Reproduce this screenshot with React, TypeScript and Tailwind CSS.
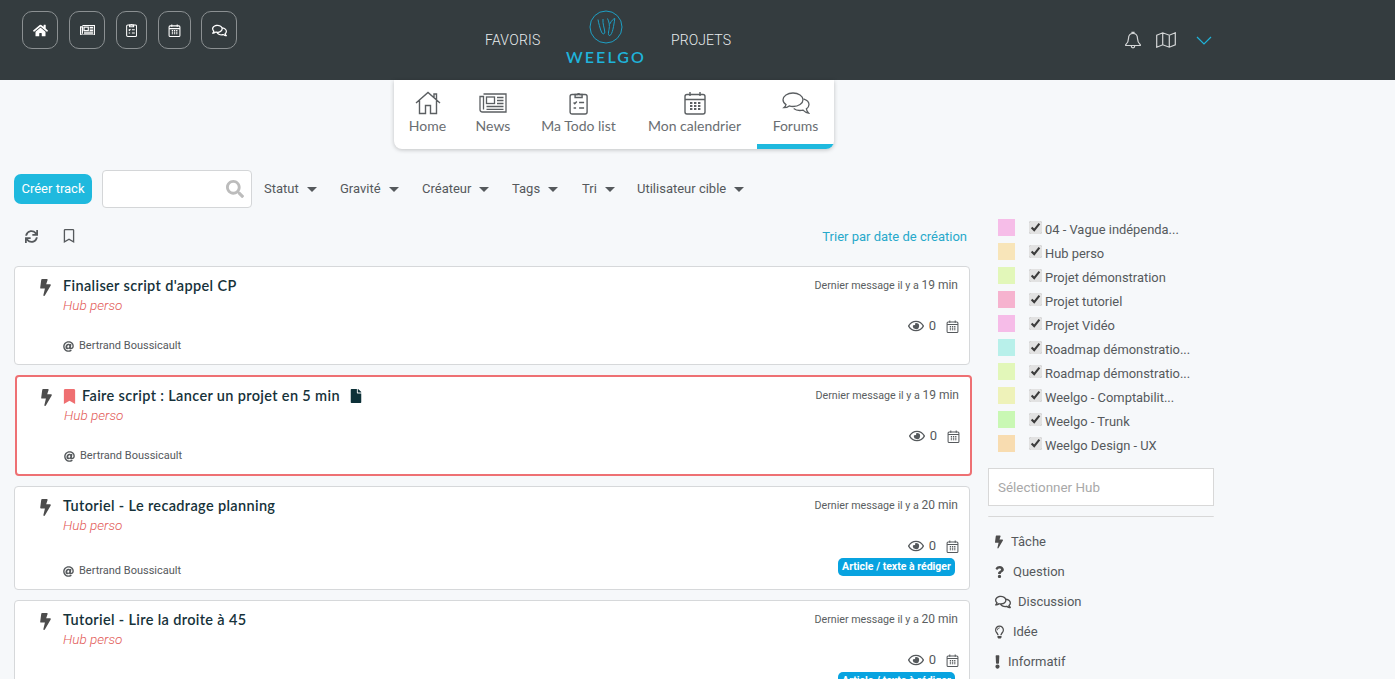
import React from "react";
import { FaHome, FaRegComments, FaSearch, FaSync, FaRegBookmark, FaBookmark, FaBolt, FaFile, FaRegEye, FaAt, FaQuestion, FaExclamation, FaRegLightbulb } from "react-icons/fa";

const ROBOTO = "font-['Roboto',sans-serif]";

function ClipboardIcon({ size = 24, w = 1.4 }: { size?: number; w?: number }) {
  return (
    <svg width={size * 0.8} height={size} viewBox="0 0 19 24" fill="none" stroke="currentColor" strokeWidth={w}>
      <rect x="1" y="3.500" width="17" height="19.500" rx="2" />
      <path d="M6 3.500h2.200a1.400 1.400 0 0 1 2.600 0H13v3H6z" />
      <path d="M4.500 11.500l1.200 1.200 2-2.200M10 11.500h5M4.500 17h2.500M10 17h5" />
    </svg>
  );
}

function CalendarIcon({ size = 24, w = 1.4 }: { size?: number; w?: number }) {
  return (
    <svg width={size} height={size} viewBox="0 0 24 24" fill="none" stroke="currentColor" strokeWidth={w}>
      <rect x="2" y="3.500" width="20" height="19.500" rx="2" />
      <path d="M2 8.500h20M7 1v4M17 1v4" />
      <path d="M7 12h2.400M11 12h2.400M15 12h2.400M7 15h2.400M11 15h2.400M15 15h2.400M7 18h2.400M11 18h2.400M15 18h2.400" strokeWidth="2" />
    </svg>
  );
}

function HomeIcon() {
  return (
    <svg width="26" height="24" viewBox="0 0 26 24" fill="none" stroke="currentColor" strokeWidth="1.4">
      <path d="M1 12L13 1.500 25 12M19 6.500V3h2.500v5.600M4.500 9.500V22.500H10.500V14.500H15.500V22.500H21.500V9.500" />
    </svg>
  );
}

function NewsIcon({ width = 28, w = 1.3 }: { width?: number; w?: number }) {
  return (
    <svg width={width} height={(width * 20) / 28} viewBox="0 0 28 20" fill="none" stroke="currentColor" strokeWidth={w}>
      <path d="M4.500 1H27V19H3.500A2.500 2.500 0 0 1 1 16.500V3.500H4.500V16.500" />
      <rect x="7.500" y="4" width="8" height="6.500" />
      <path d="M18 4.500h6.500M18 7.500h6.500M18 10.500h6.500M7.500 13.500h17M7.500 16.300h17" />
    </svg>
  );
}

function ForumIcon() {
  return (
    <svg width="28" height="23" viewBox="0 0 28 23" fill="none" stroke="currentColor" strokeWidth="1.3">
      <path d="M11 1C5.500 1 1 4 1 7.800c0 2 1.200 3.600 3 4.800-.3 1.200-1 2.200-2 3 2 0 3.800-.6 5.200-1.700 1.200.4 2.500.6 3.800.6 5.500 0 10-3 10-6.700S16.500 1 11 1z" />
      <path d="M21.500 6.800c3 1 5.500 3 5.500 5.700 0 1.800-1 3.300-2.600 4.400.2 1.400 1 2.900 2.100 4.100-2.300-.4-4.200-1.500-5.500-2.900-1 .3-2.100.4-3.200.4-2.500 0-4.600-.7-6.100-2" />
    </svg>
  );
}

function Logo() {
  return (
    <svg width="34" height="34" viewBox="0 0 34 34" fill="none" stroke="#1e9fc4" strokeWidth="1">
      <circle cx="17" cy="17" r="16" />
      <path d="M9 9.500c.5 3 2 9 3.500 12.500 1 2.500 3.500 2.500 3.300 0-.3-4-2.300-8-1.800-13" />
      <path d="M18.500 8.500c1.500 3 2.500 7 1.500 11-.7 3-1 6.500.8 6 2.700-1 4-10 5-17-1.500.5-3.300 2-5 5.500" />
    </svg>
  );
}

function BellIcon() {
  return (
    <svg width="16" height="18" viewBox="0 0 16 18" fill="none" stroke="#d4d6d7" strokeWidth="1.200">
      <path d="M8 2.500c-2.900 0-4.500 2.200-4.500 5 0 3-1 4.700-2.800 6.300v.7h14.600v-.7c-1.800-1.600-2.800-3.300-2.800-6.300 0-2.800-1.600-5-4.500-5z" />
      <path d="M7 2.500V1.300h2v1.200M6.300 15c0 2.400 3.400 2.400 3.400 0" />
    </svg>
  );
}

function MapIcon() {
  return (
    <svg width="20" height="16" viewBox="0 0 20 16" fill="none" stroke="#d4d6d7" strokeWidth="1.200">
      <path d="M.7 3.200L6.700.8l6.600 2.400 6-2.400v12l-6 2.400-6.600-2.400-6 2.400zM6.700.8v12M13.300 3.200v12" />
    </svg>
  );
}

function HeaderButton({ width, children }: { width: string; children: React.ReactNode }) {
  return (
    <div className={`${width} h-[38px] border border-[#8b9092] rounded-[10px] flex items-center justify-center text-white`}>
      {children}
    </div>
  );
}

function Header() {
  return (
    <header className="h-[80px] bg-[#343c3f] flex shrink-0">
      <div className="w-[485px] pl-[22px] pt-[11px]">
        <div className="flex">
          <HeaderButton width="w-[36px]"><FaHome size={15} /></HeaderButton>
          <div className="w-[11px]" />
          <HeaderButton width="w-[36px]"><NewsIcon width={15} w={2.200} /></HeaderButton>
          <div className="w-[11px]" />
          <HeaderButton width="w-[31px]"><ClipboardIcon size={14} w={1.800} /></HeaderButton>
          <div className="w-[11px]" />
          <HeaderButton width="w-[33px]"><CalendarIcon size={13} w={2} /></HeaderButton>
          <div className="w-[10px]" />
          <HeaderButton width="w-[36px]"><FaRegComments size={15} /></HeaderButton>
        </div>
      </div>
      <div className="w-[56px] pt-[31px] text-[14px] leading-[18px] tracking-[0.250px] font-light text-[#e8ecee] whitespace-nowrap">FAVORIS</div>
      <div className="w-[130px] flex flex-col items-center pt-[10px]">
        <Logo />
        <div className="mt-[3px] text-[16px] leading-[20px] tracking-[2.100px] font-semibold text-[#1fb3da] font-['Lato',sans-serif]">WEELGO</div>
      </div>
      <div className="w-[454px] pt-[31px] text-[14px] leading-[18px] tracking-[0.100px] font-light text-[#e8ecee]">PROJETS</div>
      <div className="flex items-start pt-[31px]">
        <BellIcon />
        <span className="ml-[15px] mt-[1px] flex"><MapIcon /></span>
        <svg width="16" height="9" viewBox="0 0 16 9" fill="none" stroke="#1fb3da" strokeWidth="1.200" className="ml-[20px] mt-[5px]">
          <path d="M1 1l7 7 7-7" />
        </svg>
      </div>
    </header>
  );
}

const tabs = [
  { label: "Home", icon: <HomeIcon />, width: "w-[67px]" },
  { label: "News", icon: <NewsIcon />, width: "w-[64px]" },
  { label: "Ma Todo list", icon: <ClipboardIcon />, width: "w-[107px]" },
  { label: "Mon calendrier", icon: <CalendarIcon />, width: "w-[125px]" },
  { label: "Forums", icon: <ForumIcon />, width: "w-[77px] border-b-[5px] border-[#1fb9de]" },
];

function Tabs() {
  return (
    <div className="ml-[394px] w-[440px] h-[69px] bg-white rounded-b-[8px] shadow-[0_1px_4px_rgba(0,0,0,0.22)] flex overflow-hidden shrink-0 font-['Lato',sans-serif] text-[#6a6e72]">
      {tabs.map((t) => (
        <div key={t.label} className={`${t.width} flex flex-col items-center`}>
          <div className="h-[28px] mt-[9px] flex items-center justify-center text-[#5b5f62]">{t.icon}</div>
          <div className="text-[14px] leading-[18px] whitespace-nowrap">{t.label}</div>
        </div>
      ))}
    </div>
  );
}

function Filter({ label, width }: { label: string; width: string }) {
  return (
    <div className={`${width} flex items-center text-[13px] text-[#55595c]`}>
      <span>{label}</span>
      <span className="ml-[8px] w-0 h-0 border-x-[5px] border-x-transparent border-t-[5px] border-t-[#55595c]" />
    </div>
  );
}

function Toolbar() {
  return (
    <div className="mt-[21px] ml-[14px] h-[38px] flex items-center shrink-0">
      <div className="w-[78px] h-[30px] rounded-[7px] bg-[#1fb9de] text-white text-[13px] flex items-center justify-center">Créer track</div>
      <div className="ml-[10px] w-[150px] h-[38px] bg-white border border-[#d4d6d8] rounded-[4px] flex items-center justify-end pr-[7px] text-[#bcbcbc]">
        <FaSearch size={18} />
      </div>
      <div className="ml-[12px] flex items-center">
        <Filter label="Statut" width="w-[76px]" />
        <Filter label="Gravité" width="w-[82px]" />
        <Filter label="Créateur" width="w-[90px]" />
        <Filter label="Tags" width="w-[70px]" />
        <Filter label="Tri" width="w-[55px]" />
        <Filter label="Utilisateur cible" width="w-[120px]" />
      </div>
    </div>
  );
}

function Badge() {
  return (
    <div className="mt-[3px] mr-[3px] h-[18px] w-[117px] bg-[#08a3e0] rounded-[5px] text-white text-[10.500px] font-bold flex items-center justify-center whitespace-nowrap">
      Article / texte à rédiger
    </div>
  );
}

type CardProps = {
  title: string;
  time: string;
  height: string;
  authorGap: string;
  badge?: boolean;
  highlighted?: boolean;
};

function Card({ title, time, height, authorGap, badge, highlighted }: CardProps) {
  return (
    <div
      className={`${height} shrink-0 bg-white flex justify-between pr-[11px] rounded-[4px] ${
        highlighted ? "border-2 border-[#ee7073] ml-px -mr-[2px] pt-[9px]" : "border border-[#d6d8da] pt-[9px]"
      }`}
    >
      <div className="flex">
        <FaBolt size={17} className={`${highlighted ? "ml-[21px]" : "ml-[22px]"} mt-[3px] text-[#4d4d4d]`} />
        <div className={highlighted ? "ml-[7px]" : "ml-[9px]"}>
          <div className="flex items-center h-[20px]">
            {highlighted && <FaBookmark size={15} className="mr-[5px] text-[#ef6f71]" />}
            <span className="text-[14.500px] leading-[20px] font-semibold tracking-[0.350px] text-[#16323a] font-['Lato',sans-serif] whitespace-nowrap">{title}</span>
            {highlighted && <FaFile size={14} className="ml-[9px] text-[#0d3138]" />}
          </div>
          <div className={`${highlighted ? "ml-[2px]" : ""} h-[19px] leading-[18px] text-[13.500px] italic font-light text-[#e25a57]`}>Hub perso</div>
          <div className={`${authorGap} ${highlighted ? "ml-[2px]" : ""} flex items-center h-[20px] text-[11px] text-[#55595c]`}>
            <FaAt size={11} className="mr-[5px]" />
            Bertrand Boussicault
          </div>
        </div>
      </div>
      <div className="flex flex-col items-end">
        <div className="h-[18px] leading-[18px] text-[10.700px] text-[#5a5e61]">
          Dernier message il y a <span className="text-[12px]">{time}</span>
        </div>
        <div className="mt-[23px] h-[18px] flex items-center text-[#55595c]">
          <FaRegEye size={16} />
          <span className="ml-[5px] text-[13px]">0</span>
          <span className="ml-[10px] -mr-px flex"><CalendarIcon size={13} w={1.900} /></span>
        </div>
        {badge && <Badge />}
      </div>
    </div>
  );
}

const hubs = [
  ["04 - Vague indépenda...", "bg-[#f6bde8]"],
  ["Hub perso", "bg-[#f8e5b9]"],
  ["Projet démonstration", "bg-[#e2f7b9]"],
  ["Projet tutoriel", "bg-[#f6b3cf]"],
  ["Projet Vidéo", "bg-[#f6bce8]"],
  ["Roadmap démonstratio...", "bg-[#b8f0ea]"],
  ["Roadmap démonstratio...", "bg-[#e2f7b9]"],
  ["Weelgo - Comptabilit...", "bg-[#eef2b9]"],
  ["Weelgo - Trunk", "bg-[#c9f8b4]"],
  ["Weelgo Design - UX", "bg-[#f8dcb0]"],
];

const kinds = [
  { label: "Tâche", icon: <FaBolt size={14} />, gap: "ml-[8px]", w: "w-[8px]" },
  { label: "Question", icon: <FaQuestion size={14} />, gap: "ml-[9px]", w: "w-[9px]" },
  { label: "Discussion", icon: <FaRegComments size={16} />, gap: "ml-[7px]", w: "w-[16px]" },
  { label: "Idée", icon: <FaRegLightbulb size={14} />, gap: "ml-[9px]", w: "w-[9px]" },
  { label: "Informatif", icon: <FaExclamation size={14} />, gap: "ml-[8px]", w: "w-[5px]" },
];

function Sidebar() {
  return (
    <aside className="w-[226px] ml-[18px] shrink-0 mt-[11px] text-[#55595c]">
      <div className="pl-[10px]">
        {hubs.map(([name, color], i) => (
          <div key={i} className="h-[24px] flex items-start">
            <span className={`w-[17px] h-[17px] ${color}`} />
            <input type="checkbox" defaultChecked readOnly className="ml-[14px] mt-[2px] w-[13px] h-[13px] m-0 accent-[#e2e2e2]" />
            <span className="ml-[3px] mt-[2px] text-[12.900px] leading-[17px] whitespace-nowrap">{name}</span>
          </div>
        ))}
      </div>
      <div className="mt-[9px] h-[38px] bg-white border border-[#d8d8d8] flex items-center pl-[9px] pt-[2px] text-[13.400px] text-[#a8a8a8]">Sélectionner Hub</div>
      <div className="mt-[10px] h-[2px] border-t border-[#d8d8d8] rounded-[4px]" />
      <div className="mt-[9px] pl-[7px]">
        {kinds.map((k) => (
          <div key={k.label} className="h-[30px] flex items-center text-[13px]">
            <span className={`${k.w} flex justify-center text-[#4d4d4d]`}>{k.icon}</span>
            <span className={k.gap}>{k.label}</span>
          </div>
        ))}
      </div>
    </aside>
  );
}

function Main() {
  return (
    <div className="flex ml-[14px]">
      <div className="w-[956px] shrink-0 flex flex-col">
        <div className="h-[58px] flex justify-between pt-[19px] shrink-0">
          <div className="flex text-[#55595c] h-[18px] items-center">
            <FaSync size={13} className="ml-[11px]" />
            <FaRegBookmark size={14} className="ml-[24px]" />
          </div>
          <div className="text-[13px] leading-[18px] mt-[1px] text-[#27a9ca] mr-[3px]">Trier par date de création</div>
        </div>
        <div className="flex flex-col gap-[10px]">
          <Card title="Finaliser script d'appel CP" time="19 min" height="h-[99px]" authorGap="mt-[21px]" />
          <Card highlighted title="Faire script : Lancer un projet en 5 min" time="19 min" height="h-[101px]" authorGap="mt-[21px]" />
          <Card title="Tutoriel - Le recadrage planning" time="20 min" height="h-[104px]" authorGap="mt-[26px]" badge />
          <Card title="Tutoriel - Lire la droite à 45" time="20 min" height="h-[104px]" authorGap="mt-[26px]" badge />
        </div>
      </div>
      <Sidebar />
    </div>
  );
}

export default function App() {
  return (
    <div className={`h-[679px] w-[1395px] overflow-hidden bg-[#f6f8fa] flex flex-col ${ROBOTO}`}>
      <Header />
      <Tabs />
      <Toolbar />
      <Main />
    </div>
  );
}
